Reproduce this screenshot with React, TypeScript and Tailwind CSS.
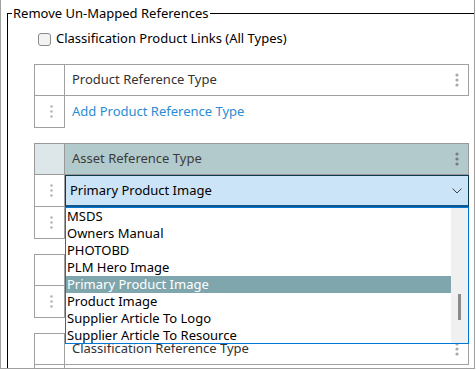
import React from 'react';

const Kebab = ({ color = '#a8a8a8' }: { color?: string }) => (
  <svg width="4" height="14" viewBox="0 0 4 14">
    <circle cx="2" cy="2" r="1.6" fill={color} />
    <circle cx="2" cy="7" r="1.6" fill={color} />
    <circle cx="2" cy="12" r="1.6" fill={color} />
  </svg>
);

const Handle = () => (
  <svg width="3" height="13" viewBox="0 0 3 13">
    <circle cx="1.5" cy="1.5" r="1.3" fill="#b5b5b5" />
    <circle cx="1.5" cy="6.5" r="1.3" fill="#b5b5b5" />
    <circle cx="1.5" cy="11.5" r="1.3" fill="#b5b5b5" />
  </svg>
);

const options = [
  'MSDS',
  'Owners Manual',
  'PHOTOBD',
  'PLM Hero Image',
  'Primary Product Image',
  'Product Image',
  'Supplier Article To Logo',
  'Supplier Article To Resource',
];

function HeaderRow({ title, shaded = false }: { title?: string; shaded?: boolean }) {
  return (
    <div className={`flex h-[32px] border ${shaded ? 'border-[#999]' : 'border-[#a0a0a0]'}`}>
      <div className={`w-[30px] border-r ${shaded ? 'border-[#999] bg-[#dde6e9]' : 'border-[#a0a0a0]'}`} />
      <div
        className={`flex flex-1 items-center justify-between pl-[7px] pr-[9px] ${
          shaded ? 'bg-[#b3cacd] text-[#3a3a3a]' : 'text-[#333]'
        }`}
      >
        <span>{title}</span>
        <Kebab color={shaded ? '#7a7a7a' : '#a8a8a8'} />
      </div>
    </div>
  );
}

function HandleCell({ dots = true }: { dots?: boolean }) {
  return (
    <div className="flex h-full w-[31px] shrink-0 items-center border-x border-b border-[#a0a0a0] pl-[15px]">
      {dots && <Handle />}
    </div>
  );
}

export default function App() {
  return (
    <div className="relative h-[369px] w-[475px] overflow-hidden border-x border-b border-[#a0a0a0] bg-white font-['Noto_Sans',sans-serif] text-[13px] text-black">
      <fieldset className="ml-[6px] mt-[3px] w-[480px] border-l border-t border-black">
        <legend className="ml-[4px] px-px leading-[20px]">Remove Un-Mapped References</legend>

        <div className="pl-[26px]">
          <label className="mt-[6px] flex h-[20px] items-center gap-[5px] pl-[4px]">
            <span className="h-[13px] w-[13px] rounded-[3px] border border-[#8a8a8a] bg-[#f3f3f3]" />
            <span>Classification Product Links (All Types)</span>
          </label>

          {/* Product references */}
          <div className="mt-[15px] w-[435px]">
            <HeaderRow title="Product Reference Type" />
            <div className="flex h-[32px]">
              <HandleCell />
              <div className="flex items-center pl-[7px] text-[#2a8dd4]">Add Product Reference Type</div>
            </div>
          </div>

          {/* Asset references */}
          <div className="mt-[15px] w-[435px]">
            <HeaderRow title="Asset Reference Type" shaded />
            <div className="flex h-[32px]">
              <HandleCell />
              <div className="flex flex-1 items-center justify-between border border-b-2 border-[#0b3a50] border-b-[#14578a] bg-[#cce4f7] pl-[4px] pr-[6px]">
                <span>Primary Product Image</span>
                <svg width="10" height="6" viewBox="0 0 10 6">
                  <path d="M0.5 0.5 L5 5 L9.5 0.5" stroke="#444" strokeWidth="1" fill="none" />
                </svg>
              </div>
            </div>
            <div className="flex h-[32px]">
              <HandleCell />
            </div>
          </div>

          {/* covered by the open list */}
          <div className="mt-[15px] w-[435px]">
            <HeaderRow />
            <div className="flex h-[32px]">
              <HandleCell />
            </div>
          </div>

          {/* Classification references */}
          <div className="mt-[15px] w-[435px]">
            <HeaderRow title="Classification Reference Type" />
            <div className="flex h-[32px]">
              <HandleCell />
            </div>
          </div>
        </div>
      </fieldset>

      {/* open select list */}
      <div className="absolute left-[64px] top-[207px] flex h-[137px] w-[404px] border border-[#0078d7] bg-white">
        <ul className="w-[385px]">
          {options.map((o, i) => (
            <li
              key={o}
              className={`h-[17px] pl-px leading-[17px] ${i === 4 ? 'bg-[#7fa6ad] text-white' : ''}`}
            >
              {o}
            </li>
          ))}
        </ul>
        <div className="relative w-[17px] bg-[#f0f0f0]">
          <div className="absolute left-[7px] top-[86px] h-[26px] w-[3px] bg-[#8a8a8a]" />
        </div>
      </div>
    </div>
  );
}
